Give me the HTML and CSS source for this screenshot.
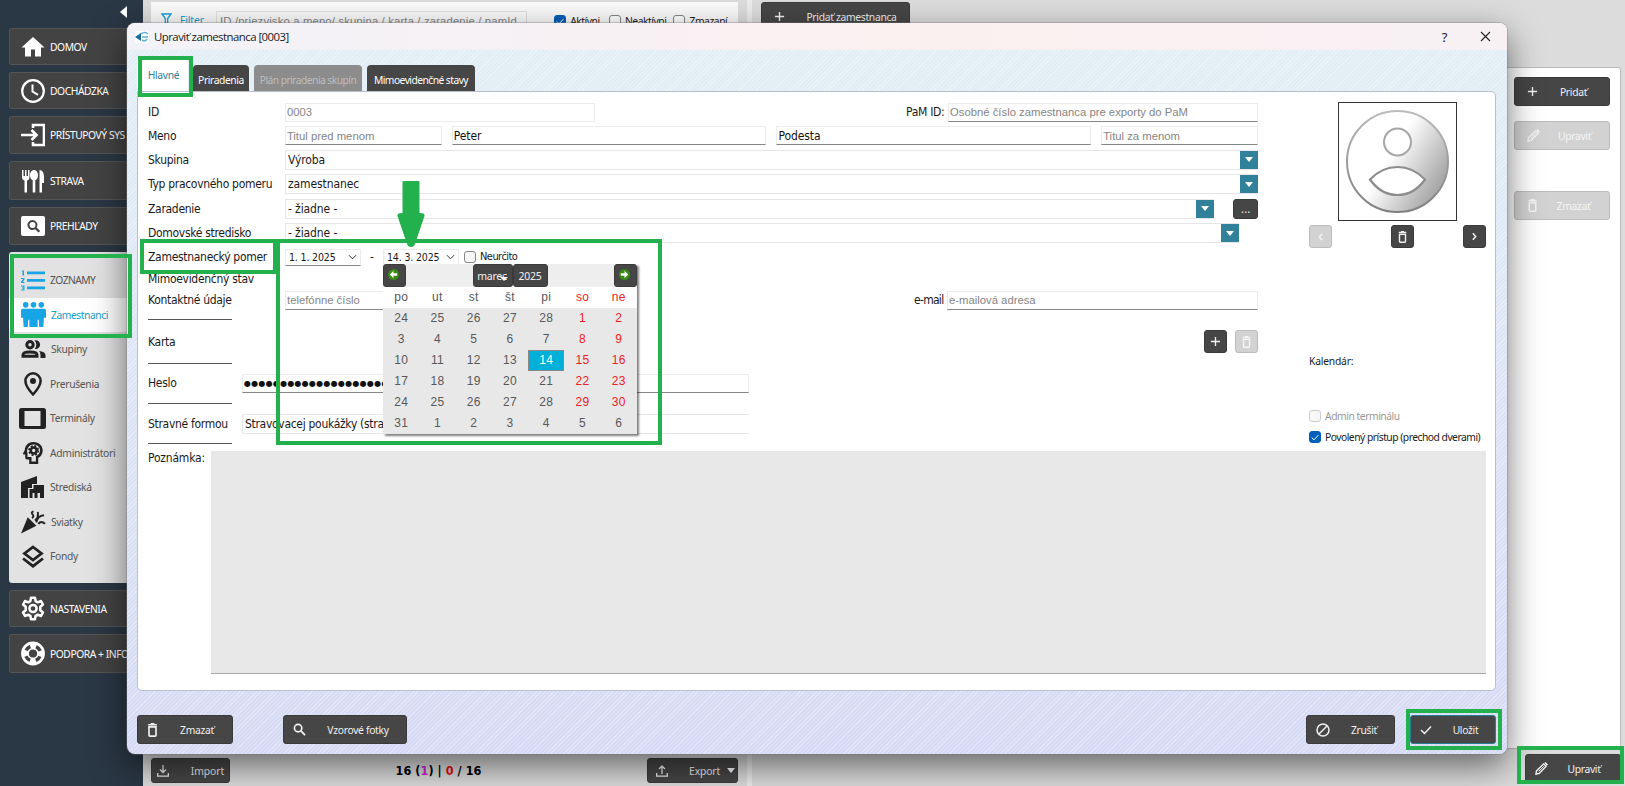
FILE: index.html
```
<!DOCTYPE html>
<html lang="sk">
<head>
    <meta charset="UTF-8">
    <meta name="viewport" content="width=device-width, initial-scale=1.0">
    <title>Upraviť zamestnanca [0003]</title>
    <link rel="stylesheet" href="styles.css">
</head>
<body>

    <!-- icon set -->
    <svg class="sprite" width="0" height="0">
        <symbol id="i-home" viewBox="0 0 24 24"><path d="M10 21.500v-7h4v7h6v-9h3.500L12 2 .5 12.500H4v9z"/></symbol>
        <symbol id="i-clock" viewBox="0 0 24 24"><circle cx="12" cy="12" r="10.800" fill="none" stroke="currentColor" stroke-width="2.200"/><path d="M11.500 5.500V12.500l5.500 3.300" fill="none" stroke="currentColor" stroke-width="2"/></symbol>
        <symbol id="i-login" viewBox="0 0 24 24"><path d="M12 5V2h11v20H12v-3M0 12h15M10.500 7l5 5-5 5" fill="none" stroke="currentColor" stroke-width="2.600"/></symbol>
        <symbol id="i-food" viewBox="0 0 24 24"><path d="M1 1h1.500v6H4V1h1.500v6H7V1h1.500v7q0 3-2.500 3.500V23.500H3.500V11.500Q1 11 1 8zM13 1c2.500 0 4 2.500 4 5.300 0 2.500-1 4.200-2.700 4.900v12.300h-2.600V11.200C10 10.500 9 8.800 9 6.300 9 3.500 10.500 1 13 1zM18.500 1C21.500 1 23 4 23 8v6h-2v9.500h-2.500z"/></symbol>
        <symbol id="i-preview" viewBox="0 0 24 20"><path fill-rule="evenodd" d="M2 0h20q2 0 2 2v16q0 2-2 2H2q-2 0-2-2V2q0-2 2-2zm9.500 4a5 5 0 1 0 2.600 9.200l3.500 3.300 1.500-1.500-3.400-3.400A5 5 0 0 0 11.500 4zm0 2a3 3 0 1 1 0 6 3 3 0 0 1 0-6z"/></symbol>
        <symbol id="i-list" viewBox="0 0 24 21"><path d="M6 1.500h18v2.800H6zM6 9h18v2.800H6zM6 16.500h18v2.800H6zM1 .5h2v5H1.500V1.500H1zM0 8h3.500v1.500L1.800 12h1.700v1H0v-1.300L2.200 9H0zM0 15.500h3.500v5H0v-1h2.300v-1H1v-1h1.300v-1H0z"/></symbol>
        <symbol id="i-people" viewBox="0 0 24 24"><circle cx="4.500" cy="2.700" r="2.700"/><circle cx="12" cy="2.700" r="2.700"/><circle cx="19.500" cy="2.700" r="2.700"/><path d="M1.500 6.500h21q1.500 0 1.500 2V15h-2l-.5 9h-4l-.5-7h-1v7H8v-7H7l-.5 7h-4L2 15H0V8.500q0-2 1.500-2z"/></symbol>
        <symbol id="i-group" viewBox="0 0 24 18"><g fill="none" stroke="currentColor" stroke-width="3"><circle cx="8.500" cy="4.700" r="3.200"/><path d="M1.500 16.300v-1.500q0-2.800 7-2.800t7 2.800v1.500z"/></g><path d="M13 .5a4.300 4.300 0 1 1 .3 8.300 6 6 0 0 0-.3-8.300zM17.500 11q6 .5 6.500 4v3h-5v-3q0-2.500-1.500-4z"/></symbol>
        <symbol id="i-pin" viewBox="0 0 18 24"><path d="M9 1.300a7.600 7.600 0 0 0-7.600 7.600C1.400 14 9 22.500 9 22.500S16.600 14 16.600 8.900A7.600 7.600 0 0 0 9 1.300z" fill="none" stroke="currentColor" stroke-width="2.500"/><circle cx="9" cy="9" r="3"/></symbol>
        <symbol id="i-tablet" viewBox="0 0 27 21"><path fill-rule="evenodd" d="M2.500 0h22Q27 0 27 2.500v16q0 2.500-2.500 2.500h-22Q0 21 0 18.500v-16Q0 0 2.500 0zM5.500 3v15h16V3z"/></symbol>
        <symbol id="i-admin" viewBox="0 0 20 22"><path fill-rule="evenodd" d="M10.500 0C5.500 0 2 3.500 1.800 8L0 11.500q-.3 1 .8 1h1.400v3q0 2 2 2h2V22h9v-6c2.800-1.500 4.500-4.300 4.500-7.500C19.700 3.500 15.500 0 10.500 0zm0 2.500c3.800 0 6.600 2.500 6.600 6 0 2.400-1.500 4.600-4.200 5.800v5.200H8.500V15h-4v-4.500H4c0-5 2.500-8 6.500-8z"/><circle cx="10.700" cy="8.500" r="3" fill="none" stroke="currentColor" stroke-width="2.600"/><circle cx="10.700" cy="8.500" r="4.700" fill="none" stroke="currentColor" stroke-width="1.600" stroke-dasharray="2 1.700"/></symbol>
        <symbol id="i-building" viewBox="0 0 24 22"><path d="M0 6L16 0v8h-5v4H7v10H0zM8.500 13h4V9H23v13h-4v-5h-2.500v5h-3v-5h-2v5h-3z"/></symbol>
        <symbol id="i-party" viewBox="0 0 26 24"><path d="M7 7l9 9-16 8z"/><path d="M11.500 8q2.500-2 .5-4t1-3M14.500 10.500q4-3 3-9M16 12.500q1-7 8-7.500M18 14q3-4 7 0" fill="none" stroke="currentColor" stroke-width="2"/></symbol>
        <symbol id="i-layers" viewBox="0 0 22 23"><path d="M11 2l8.500 6.500L11 15 2.500 8.500zM1 13.500l10 7.700 10-7.700" fill="none" stroke="currentColor" stroke-width="2.800"/></symbol>
        <symbol id="i-gear" viewBox="0 0 24 24"><path d="M10 1.200h4l.6 3.400 2.200 1.200 3.200-1.300 2 3.500-2.700 2.300v3.400l2.700 2.300-2 3.500-3.200-1.300-2.200 1.200-.6 3.400h-4l-.6-3.400-2.200-1.200L4 19.500 2 16l2.700-2.300v-3.400L2 8l2-3.500 3.200 1.300 2.200-1.200z" fill="none" stroke="currentColor" stroke-width="2.500" stroke-linejoin="round"/><circle cx="12" cy="12" r="3.600" fill="none" stroke="currentColor" stroke-width="2.500"/></symbol>
        <symbol id="i-help" viewBox="0 0 24 24"><circle cx="12" cy="12" r="10.600" fill="none" stroke="currentColor" stroke-width="2.600"/><circle cx="12" cy="12" r="7" fill="none" stroke="currentColor" stroke-width="5.500" stroke-dasharray="5.500 5.500" stroke-dashoffset="2.750"/><circle cx="12" cy="12" r="5" fill="none" stroke="currentColor" stroke-width="1.500"/></symbol>
        <symbol id="i-trash" viewBox="0 0 12 16"><path d="M1 2h10M4 1h4M2 4.500h8V14q0 1-1 1H3q-1 0-1-1z" fill="none" stroke="currentColor" stroke-width="1.900"/></symbol>
        <symbol id="i-plus" viewBox="0 0 12 12"><path d="M6 1v10M1 6h10" fill="none" stroke="currentColor" stroke-width="1.500"/></symbol>
        <symbol id="i-pencil" viewBox="0 0 14 14"><path d="M1 13l.6-3.400L9.300 2l2.700 2.700-7.700 7.700z" fill="none" stroke="currentColor" stroke-width="1.500"/><path d="M10 1.200L11.200 0 14 2.800 12.800 4z"/><path d="M4 10l5.500-5.500" stroke="currentColor"/></symbol>
        <symbol id="i-search" viewBox="0 0 14 14"><circle cx="5.500" cy="5.500" r="4" fill="none" stroke="currentColor" stroke-width="1.800"/><path d="M8.500 8.500l4.500 4.500" stroke="currentColor" stroke-width="2"/></symbol>
        <symbol id="i-block" viewBox="0 0 14 14"><circle cx="7" cy="7" r="6" fill="none" stroke="currentColor" stroke-width="1.500"/><path d="M11 3l-8 8" stroke="currentColor" stroke-width="1.500"/></symbol>
        <symbol id="i-check" viewBox="0 0 12 10"><path d="M1 5l3.500 3.500L11 1.500" fill="none" stroke="currentColor" stroke-width="1.500"/></symbol>
        <symbol id="i-download" viewBox="0 0 12 12"><path d="M6 0v7M3 4.500l3 3 3-3M.7 8v3.200h10.600V8" fill="none" stroke="currentColor" stroke-width="1.300"/></symbol>
        <symbol id="i-upload" viewBox="0 0 12 12"><path d="M6 9V1.500M3 4l3-3 3 3M.7 8v3.200h10.600V8" fill="none" stroke="currentColor" stroke-width="1.300"/></symbol>
        <symbol id="i-left" viewBox="0 0 6 10"><path d="M5 1L1.500 5 5 9" fill="none" stroke="currentColor" stroke-width="1.800"/></symbol>
        <symbol id="i-right" viewBox="0 0 6 10"><path d="M1 1l3.500 4L1 9" fill="none" stroke="currentColor" stroke-width="1.800"/></symbol>
        <symbol id="i-down" viewBox="0 0 10 6"><path d="M1 1l4 4 4-4" fill="none" stroke="currentColor" stroke-width="1"/></symbol>
        <symbol id="i-arrow" viewBox="0 0 12 12"><circle cx="6" cy="6" r="6" fill="#3b8a18"/><path d="M6 2L2 6l4 4V7.300h4V4.700H6z" fill="#fff"/></symbol>
    </svg>

    <div class="app">
        <nav class="sidebar">
            <span class="collapse"></span>
            <a class="nav-btn h1"><svg width="24" height="24"><use href="#i-home"/></svg>DOMOV</a>
            <a class="nav-btn h2"><svg width="24" height="24"><use href="#i-clock"/></svg>DOCHÁDZKA</a>
            <a class="nav-btn h3"><svg width="24" height="24"><use href="#i-login"/></svg>PRÍSTUPOVÝ SYS</a>
            <a class="nav-btn h4"><svg width="24" height="24"><use href="#i-food"/></svg>STRAVA</a>
            <a class="nav-btn h3"><svg width="24" height="20"><use href="#i-preview"/></svg>PREHĽADY</a>
            <div class="submenu">
                <a class="head"><svg class="blue" width="24" height="21"><use href="#i-list"/></svg>ZOZNAMY</a>
                <a class="active"><svg class="blue" width="25" height="25"><use href="#i-people"/></svg>Zamestnanci</a>
                <a><svg width="25" height="18"><use href="#i-group"/></svg>Skupiny</a>
                <a><svg width="24" height="24"><use href="#i-pin"/></svg>Prerušenia</a>
                <a class="wide"><svg width="27" height="21"><use href="#i-tablet"/></svg>Terminály</a>
                <a><svg width="24" height="22"><use href="#i-admin"/></svg>Administrátori</a>
                <a><svg width="24" height="22"><use href="#i-building"/></svg>Strediská</a>
                <a><svg width="25" height="24"><use href="#i-party"/></svg>Sviatky</a>
                <a><svg width="24" height="23"><use href="#i-layers"/></svg>Fondy</a>
            </div>
            <a class="nav-btn h2"><svg width="24" height="25"><use href="#i-gear"/></svg>NASTAVENIA</a>
            <a class="nav-btn h4"><svg width="24" height="25"><use href="#i-help"/></svg>PODPORA + INFO</a>
        </nav>

        <section class="list-pane">
            <div class="filter">
                <svg width="11" height="12" viewBox="0 0 11 12"><path d="M1 1h9L6.700 5.500V11L4.300 9.500v-4z" fill="none" stroke="#18a0d8" stroke-width="1.300"/></svg>
                <span class="filter-label">Filter</span>
                <input class="filter-input" placeholder="ID /priezvisko a meno/ skupina / karta / zaradenie / pamId">
                <span class="check f1"><i class="box on"><svg width="8" height="7"><use href="#i-check"/></svg></i>Aktívni</span>
                <span class="check f2"><i class="box"></i>Neaktívni</span>
                <span class="check"><i class="box"></i>Zmazaní</span>
            </div>
            <div class="list-footer">
                <button class="btn import"><svg width="12" height="12"><use href="#i-download"/></svg>Import</button>
                <b class="count">16 (<em>1</em>) | <strong>0</strong> / 16</b>
                <button class="btn export"><svg width="12" height="12"><use href="#i-upload"/></svg>Export<i class="tri"></i></button>
            </div>
        </section>

        <section class="detail-pane">
            <div class="detail-top"><button class="btn add-emp"><svg width="11" height="11"><use href="#i-plus"/></svg>Pridať zamestnanca</button></div>
            <div class="detail-card">
                <button class="btn side"><svg width="11" height="11"><use href="#i-plus"/></svg><span>Pridať</span></button>
                <button class="btn side off"><svg width="13" height="13"><use href="#i-pencil"/></svg><span>Upraviť</span></button>
                <button class="btn side off last"><svg width="11" height="13"><use href="#i-trash"/></svg><span>Zmazať</span></button>
            </div>
            <button class="btn side edit"><svg width="13" height="13"><use href="#i-pencil"/></svg><span>Upraviť</span></button>
        </section>
    </div>

    <div class="dialog">
        <header class="titlebar">
            <svg width="14" height="12" viewBox="0 0 14 12"><rect width="14" height="12" rx="2" fill="#fff"/><path d="M6 2v8L0 6z" fill="#1c6f94"/><path d="M6 3q4-3 7 0M7 6h6M7 9q3 2 5-1" fill="none" stroke="#5fb4d8" stroke-width="1.600"/></svg>
            <span class="title">Upraviť zamestnanca [0003]</span>
            <span class="help">?</span>
            <svg class="close" width="11" height="11" viewBox="0 0 11 11"><path d="M1 1l9 9M10 1l-9 9" stroke="#222" stroke-width="1.100"/></svg>
        </header>

        <div class="tabs">
            <span class="tab current">Hlavné</span>
            <span class="tab t-pri">Priradenia</span>
            <span class="tab t-plan">Plán priradenia skupín</span>
            <span class="tab t-mimo">Mimoevidenčné stavy</span>
        </div>

        <main class="panel">
            <div class="columns">
                <form class="form">
                    <div class="row r24">
                        <label>ID</label>
                        <input class="w310 flat" placeholder="0003">
                        <label class="push">PaM ID:</label>
                        <input class="w310" placeholder="Osobné číslo zamestnanca pre exporty do PaM">
                    </div>
                    <div class="row r23">
                        <label>Meno</label>
                        <input class="w157" placeholder="Titul pred menom">
                        <input class="w314" value="Peter">
                        <input class="w314" value="Podesta">
                        <input class="w157" placeholder="Titul za menom">
                    </div>
                    <div class="row r25"><label>Skupina</label><div class="select">Výroba<i></i></div></div>
                    <div class="row r24"><label>Typ pracovného pomeru</label><div class="select">zamestnanec<i></i></div></div>
                    <div class="row r25"><label>Zaradenie</label><div class="select">- žiadne -<i></i></div><button type="button" class="btn dots">...</button></div>
                    <div class="row r24"><label>Domovské stredisko</label><div class="select short">- žiadne -<i></i></div></div>
                    <div class="row r24">
                        <label>Zamestnanecký pomer</label>
                        <div class="date">1. 1. 2025<svg width="9" height="6"><use href="#i-down"/></svg></div>
                        <span class="dash">-</span>
                        <div class="date">14. 3. 2025<svg width="9" height="6"><use href="#i-down"/></svg></div>
                        <span class="check never"><i class="box"></i>Neurčito</span>
                    </div>
                    <div class="row r19"><label>Mimoevidenčný stav</label></div>
                    <div class="row r24">
                        <label>Kontaktné údaje</label>
                        <input class="w310" placeholder="telefónne číslo">
                        <label class="push mail">e-mail</label>
                        <input class="w311" placeholder="e-mailová adresa">
                    </div>
                    <hr class="l14">
                    <div class="row r31">
                        <label>Karta</label>
                        <button type="button" class="btn sq push"><svg width="11" height="11"><use href="#i-plus"/></svg></button>
                        <button type="button" class="btn sq off"><svg width="9" height="12"><use href="#i-trash"/></svg></button>
                    </div>
                    <hr class="l12">
                    <div class="row r28 narrow"><label>Heslo</label><input class="w507 pass" value="●●●●●●●●●●●●●●●●●●●●●●●●●●●●●●●●"></div>
                    <hr class="l12">
                    <div class="row r29 narrow"><label>Stravné formou</label><div class="select plain">Stravovacej poukážky (stra</div></div>
                    <hr class="l10">
                </form>

                <aside class="photo">
                    <div class="avatar">
                        <svg width="117" height="117" viewBox="0 0 117 117">
                            <defs><linearGradient id="g" x1="0" y1="0.200" x2="1" y2="0.800"><stop offset=".42" stop-color="#fff"/><stop offset=".9" stop-color="#a9a9a9"/></linearGradient>
                            <linearGradient id="s" x1="0" y1="0" x2="0" y2="1"><stop offset="0" stop-color="#bbb"/><stop offset="1" stop-color="#808080"/></linearGradient></defs>
                            <circle cx="58.500" cy="58.500" r="50.500" fill="url(#g)" stroke="url(#s)" stroke-width="2"/>
                            <circle cx="58.500" cy="39" r="13.500" fill="#fff" stroke="#a5a5a5" stroke-width="2"/>
                            <path d="M31 76.500Q43 64 58.500 64T86 76.500Q75 92 58.500 92T31 76.500z" fill="#fff" stroke="#8c8c8c" stroke-width="2.200"/>
                        </svg>
                    </div>
                    <div class="photo-nav">
                        <button class="btn sq off"><svg width="5" height="8"><use href="#i-left"/></svg></button>
                        <button class="btn sq mid"><svg width="9" height="12"><use href="#i-trash"/></svg></button>
                        <button class="btn sq"><svg width="5" height="9"><use href="#i-right"/></svg></button>
                    </div>
                    <p class="calendar-label">Kalendár:</p>
                    <span class="check muted"><i class="box"></i>Admin terminálu</span>
                    <span class="check access"><i class="box on"><svg width="8" height="7"><use href="#i-check"/></svg></i>Povolený prístup (prechod dverami)</span>
                </aside>
            </div>
            <div class="note"><label>Poznámka:</label><textarea></textarea></div>
        </main>

        <footer class="actions">
            <button class="btn a-del"><svg width="11" height="14"><use href="#i-trash"/></svg><span>Zmazať</span></button>
            <button class="btn a-photo"><svg width="13" height="13"><use href="#i-search"/></svg><span>Vzorové fotky</span></button>
            <button class="btn a-cancel"><svg width="14" height="14"><use href="#i-block"/></svg><span>Zrušiť</span></button>
            <button class="btn a-save"><svg width="12" height="10"><use href="#i-check"/></svg><span>Uložit</span></button>
        </footer>
    </div>

    <!-- date picker popup -->
    <div class="picker">
        <div class="picker-head">
            <button class="btn prev"><svg width="11" height="11"><use href="#i-arrow"/></svg></button>
            <button class="btn month">marec<i class="tri"></i></button>
            <button class="btn year">2025</button>
            <button class="btn prev"><svg class="flip" width="11" height="11"><use href="#i-arrow"/></svg></button>
        </div>
        <div class="days names"><span>po</span><span>ut</span><span>st</span><span>št</span><span>pi</span><span class="red">so</span><span class="red">ne</span></div>
        <div class="days">
            <span>24</span><span>25</span><span>26</span><span>27</span><span>28</span><span class="red">1</span><span class="red">2</span>
            <span>3</span><span>4</span><span>5</span><span>6</span><span>7</span><span class="red">8</span><span class="red">9</span>
            <span>10</span><span>11</span><span>12</span><span>13</span><span class="sel">14</span><span class="red">15</span><span class="red">16</span>
            <span>17</span><span>18</span><span>19</span><span>20</span><span>21</span><span class="red">22</span><span class="red">23</span>
            <span>24</span><span>25</span><span>26</span><span>27</span><span>28</span><span class="red">29</span><span class="red">30</span>
            <span>31</span><span>1</span><span>2</span><span>3</span><span>4</span><span>5</span><span>6</span>
        </div>
    </div>

    <!-- highlights -->
    <div class="mark m-tab"></div>
    <div class="mark m-menu"></div>
    <div class="mark m-label"></div>
    <div class="mark m-date"></div>
    <div class="mark m-save"></div>
    <div class="mark m-edit"></div>
    <svg class="pointer" width="28" height="68" viewBox="0 0 28 68"><path d="M6.500 1h15q1 0 1 1v31l4 .5q1.500 1 1 2.500L18 64q-1 3-4 3t-4-3L.5 36q-.5-1.500 1-2.500l4-.5V2q0-1 1-1z" fill="#22b14c"/></svg>

</body>
</html>
```
FILE: styles.css
```
:root {
    --dark: #464646;
    --mark: #22b14c;
    --teal: #32819a;
    --ui: "DejaVu Sans Condensed", "DejaVu Sans", Tahoma, sans-serif;
    --arial: "Liberation Sans", Arial, sans-serif;
}
* {
    box-sizing: border-box;
}
body {
    margin: 0;
    width: 1625px;
    height: 786px;
    overflow: hidden;
    position: relative;
    font: 10.3px/14px "Noto Sans", sans-serif;
    letter-spacing: -0.45px;
    color: #1a1a1a;
}
.sprite {
    display: none;
}
svg {
    fill: currentColor;
    flex: none;
}
input, textarea, button {
    font: inherit;
    letter-spacing: inherit;
    margin: 0;
    border-radius: 0;
    outline: none;
}
.btn {
    display: flex;
    align-items: center;
    justify-content: center;
    flex: none;
    padding: 0;
    border: 1px solid #3a3a3a;
    border-radius: 3px;
    background: var(--dark);
    color: #f0f0f0;
    letter-spacing: -0.3px;
}
.btn.off {
    background: #d2d2d2;
    border-color: #bcbcbc;
    color: #f5f5f5;
}
.check {
    display: flex;
    align-items: center;
    gap: 4px;
    white-space: nowrap;
}
.box {
    display: flex;
    align-items: center;
    justify-content: center;
    flex: none;
    width: 12px;
    height: 12px;
    border: 1px solid #868686;
    border-radius: 3px;
    background: #f6f6f6;
    color: #fff;
}
.box.on {
    background: #005fb8;
    border-color: #005fb8;
}

/* application behind the dialog */
.app {
    display: grid;
    grid-template-columns: 143px 609px 1fr;
    height: 786px;
    background: #dcdcdc;
}
.sidebar {
    display: flex;
    flex-direction: column;
    gap: 7px;
    padding-left: 9px;
    background: #2a3744;
    overflow: hidden;
}
.collapse {
    align-self: flex-end;
    margin: 6px 16px 3px 0;
    border: solid transparent;
    border-width: 6.5px 7px 6.5px 0;
    border-right-color: #fff;
}
.nav-btn {
    display: flex;
    align-items: center;
    gap: 5px;
    flex: none;
    padding-left: 11px;
    border: 1px solid #555;
    border-radius: 2px;
    background: #434343;
    color: #fff;
    white-space: nowrap;
}
.h1 { height: 37px; }
.h2 { height: 37px; }
.h3 { height: 38px; }
.h4 { height: 39px; }
.submenu {
    flex: none;
    height: 331px;
    padding-top: 11px;
    border-radius: 3px;
    background: #e2e2e2;
}
.submenu a {
    display: flex;
    align-items: center;
    gap: 5px;
    height: 34.5px;
    padding-left: 12px;
    color: #555;
    letter-spacing: -0.3px;
}
.submenu a.head {
    letter-spacing: -0.55px;
}
.submenu a.wide {
    gap: 4px;
    padding-left: 10px;
}
.submenu a svg {
    color: #222;
}
.submenu a svg.blue {
    color: #18a5e6;
}
.submenu a.active {
    background: #fff;
    color: #18a0c8;
    letter-spacing: -0.45px;
}
.list-pane {
    display: flex;
    flex-direction: column;
    justify-content: space-between;
    padding: 2px 14px 3px 8px;
    border-right: 5px solid #ececec;
}
.filter {
    display: flex;
    align-items: flex-start;
    height: 60px;
    width: 587px;
    padding: 11px 0 0 10px;
    background: #fafafa;
}
.filter-label {
    width: 22px;
    margin: 0 14px 0 8px;
    color: #18a0c8;
    letter-spacing: -0.1px;
}
.filter-input {
    width: 318px;
    height: 20px;
    padding: 0 3px;
    margin-top: -2px;
    border: 1px solid #e0e0e0;
    background: none;
}
.filter-input::placeholder {
    letter-spacing: 0.15px;
}
.filter .check { margin-top: 1px; width: 66px; }
.filter .f1 { margin-left: 27px; width: 56px; }
.filter .box { background: #fff; }
.filter .box.on { background: #005fb8; }
.list-footer {
    display: flex;
    align-items: center;
    justify-content: space-between;
    width: 587px;
}
.import {
    width: 79px;
    height: 25px;
    gap: 22px;
    letter-spacing: 0;
}
.export {
    width: 91px;
    height: 25px;
    gap: 21px;
    justify-content: flex-start;
    padding-left: 8px;
    letter-spacing: -0.1px;
}
.export .tri {
    margin-left: -14px;
}
.tri {
    border: solid transparent;
    border-width: 5px 4.5px 0;
    border-top-color: #fff;
}
.count {
    font: bold 12.5px var(--ui);
    letter-spacing: 0.05px;
    color: #000;
}
.count em {
    font-style: normal;
    color: #d020d0;
}
.count strong {
    color: #e01010;
}
.detail-pane {
    display: flex;
    flex-direction: column;
}
.detail-top {
    height: 67px;
    padding: 2px 0 0 9px;
}
.add-emp {
    width: 149px;
    height: 29px;
    gap: 21px;
    letter-spacing: -0.3px;
}
.detail-card {
    display: flex;
    flex-direction: column;
    align-items: flex-end;
    height: 682px;
    width: 869px;
    padding: 9px 10px 0 0;
    border: 1px solid #bbb;
    border-radius: 3px;
    background: #fff;
}
.side {
    width: 96px;
    height: 29px;
    margin-bottom: 15px;
    justify-content: flex-start;
    padding-left: 12px;
}
.side span {
    flex: 1;
    text-align: center;
}
.side.last {
    margin-top: 26px;
}
.side.edit {
    align-self: flex-end;
    margin: 5px 4px 0 0;
    padding-left: 9px;
}

/* dialog */
.dialog {
    position: absolute;
    left: 127px;
    top: 23px;
    width: 1380px;
    height: 731px;
    padding: 0 11px 0 10px;
    border-radius: 8px;
    background: repeating-linear-gradient(135deg, rgba(255,255,255,.3) 0 1px, transparent 1px 3px), linear-gradient(#e2eff5, #dde2f5 60%, #d6daf4);
    box-shadow: 0 0 0 1px rgba(120,120,120,.35), 0 12px 34px rgba(0,0,0,.55);
}
.titlebar {
    display: flex;
    align-items: center;
    height: 27px;
    margin: 0 -11px 0 -10px;
    padding: 0 16px 0 8px;
    border-radius: 8px 8px 0 0;
    background: linear-gradient(90deg, #f2f2f8, #fbf0f0 60%, #f7f1f4);
}
.title {
    margin-left: 5px;
    font: 11.4px/16px "Open Sans", "Noto Sans", sans-serif;
    letter-spacing: -0.53px;
}
.help {
    margin-left: auto;
    font-size: 13px;
}
.close {
    margin-left: 33px;
}
.tabs {
    display: flex;
    align-items: flex-end;
    gap: 5px;
    height: 41px;
}
.tab {
    height: 26px;
    padding-top: 8px;
    border-radius: 4px 4px 0 0;
    background: var(--dark);
    color: #fff;
    text-align: center;
    white-space: nowrap;
    letter-spacing: -0.55px;
}
.tab.current {
    width: 51px;
    height: 31px;
    padding-left: 2px;
    background: #fff;
    color: #32819a;
    letter-spacing: -0.3px;
}
.t-pri { width: 56px; letter-spacing: -0.4px; }
.t-plan { width: 108px; background: #8c8c8c; color: #bdbdbd; }
.t-mimo { width: 108px; }
.panel {
    height: 600px;
    padding: 8px 8px 0 10px;
    border: 1px solid #b9c0cc;
    border-radius: 0 5px 5px 5px;
    background: #fff;
}
.columns {
    display: flex;
    gap: 51px;
}
.form {
    width: 1110px;
    font: 12px/16px var(--ui);
    letter-spacing: -0.1px;
}
.row {
    display: flex;
    align-items: center;
}
.r19 { height: 19px; }
.r23 { height: 23px; gap: 10px; }
.r24 { height: 24px; }
.r25 { height: 25px; }
.r28 { height: 28px; }
.r29 { height: 29px; }
.r31 { height: 31px; }
.row label {
    width: 137px;
    white-space: nowrap;
    letter-spacing: -0.3px;
}
.r23 label {
    width: 127px;
}
.narrow label {
    width: 94px;
}
.row label.push {
    width: 42px;
    margin-left: auto;
}
.row label.mail {
    width: 33px;
    letter-spacing: -0.7px;
}
.push {
    margin-left: auto;
}
.row input {
    height: 19px;
    padding: 0 2px 0 1px;
    border: 1px solid #ececec;
    border-bottom-color: #868686;
    background: #fff;
    color: #111;
}
::placeholder {
    font: 11.3px var(--arial);
    letter-spacing: 0;
    color: #858585;
    opacity: 1;
}
.row input.flat {
    border-bottom-color: #ececec;
}
.row .w157 { width: 157px; }
.row .w310 { width: 310px; }
.row .w311 { width: 311px; }
.row .w314 { width: 315px; }
.row .w507 { width: 507px; }
.row .pass {
    font: 8px "DejaVu Sans", sans-serif;
    letter-spacing: 0.25px;
}
.select {
    display: flex;
    align-items: center;
    justify-content: space-between;
    flex: 1;
    height: 20px;
    padding-left: 2px;
    border: 1px solid #e6e6e6;
    border-right: 0;
}
.select.short {
    margin-right: 19px;
}
.select.plain {
    flex: none;
    width: 507px;
    letter-spacing: -0.3px;
}
.select i {
    display: flex;
    align-items: center;
    justify-content: center;
    width: 18px;
    height: 18px;
    background: var(--teal);
}
.select i::before {
    content: "";
    border: solid transparent;
    border-width: 5px 4.5px 0;
    border-top-color: #fff;
}
.dots {
    width: 25px;
    height: 20px;
    margin-left: 19px;
}
.date {
    display: flex;
    align-items: center;
    justify-content: space-between;
    width: 76px;
    height: 17px;
    padding: 0 3px;
    border: 1px solid #ececec;
    border-bottom-color: #868686;
    font-size: 10.5px;
    letter-spacing: -0.15px;
    white-space: nowrap;
}
.dash {
    width: 22px;
    text-align: center;
}
.never {
    margin-left: 5px;
    font-size: 11px;
    letter-spacing: -0.55px;
}
hr {
    width: 84px;
    margin: 0;
    border: 0;
    background: linear-gradient(#555, #555) center / 100% 1px no-repeat;
}
.l10 { height: 10px; }
.l12 { height: 12px; }
.l14 { height: 14px; }
.sq {
    width: 23px;
    height: 23px;
}
.sq + .sq.off {
    margin-left: 8px;
}
.photo {
    width: 177px;
}
.avatar {
    width: 119px;
    height: 119px;
    margin: 2px 0 4px 29px;
    border: 1px solid #333;
}
.photo-nav {
    display: flex;
    justify-content: space-between;
}
.photo-nav .mid {
    margin-left: 10px;
}
.calendar-label {
    margin: 106px 0 41px 0;
    letter-spacing: -0.2px;
}
.access {
    margin-top: 7px;
    letter-spacing: -0.5px;
}
.muted {
    color: #999;
    letter-spacing: -0.45px;
}
.muted .box {
    border-color: #ccc;
}
.note {
    display: flex;
    margin-top: 3px;
}
.note label {
    width: 63px;
    font: 12px/14px var(--ui);
    letter-spacing: -0.2px;
}
.note textarea {
    width: 1275px;
    height: 223px;
    border: 0;
    border-bottom: 1px solid #a8a8a8;
    background: #e8e8e8;
    resize: none;
}
.actions {
    display: flex;
    padding-top: 24px;
}
.actions .btn {
    height: 29px;
    justify-content: flex-start;
    padding-left: 9px;
}
.actions span {
    flex: 1;
    padding-left: 4px;
    text-align: center;
}
.a-del { width: 96px; }
.a-photo { width: 124px; margin-left: 50px; }
.a-cancel { width: 89px; margin-left: auto; }
.a-save { width: 86px; margin-left: 15px; }
.actions .a-save { border: 1px solid #2a7d96; }

/* date picker */
.picker {
    position: absolute;
    left: 383px;
    top: 264px;
    width: 254px;
    background: #e8e8e8;
    box-shadow: 2px 2px 2px rgba(0,0,0,.5);
    font: 12px/21px var(--arial);
    letter-spacing: 0.3px;
    color: #585858;
}
.picker-head {
    display: flex;
    height: 23px;
    background: #eee;
}
.picker .btn {
    width: 23px;
    font: 10.5px "Noto Sans", sans-serif;
}
.picker .prev {
    padding: 0 2px 2px 0;
}
.picker .month {
    width: 40px;
    margin-left: auto;
}
.month .tri {
    margin: 7px 0 0 -7px;
    border-width: 4px 4px 0;
}
.picker .year {
    width: 35px;
    margin-right: auto;
}
.flip {
    transform: scaleX(-1);
}
.days {
    display: grid;
    grid-template-columns: repeat(7, 1fr);
    text-align: center;
}
.days.names {
    background: #fff;
}
.days span {
    height: 21px;
}
.red {
    color: #f01c24;
}
.sel {
    background: #00b0d8;
    color: #fff;
    box-shadow: inset 0 0 0 1px #888;
}

/* highlights */
.mark {
    position: absolute;
    border: 4px solid var(--mark);
}
.m-tab { left: 138px; top: 56px; width: 55px; height: 41px; }
.m-menu { left: 10px; top: 254px; width: 122px; height: 84px; }
.m-label { left: 140px; top: 239px; width: 137px; height: 35px; }
.m-date { left: 276px; top: 239px; width: 386px; height: 206px; }
.m-save { left: 1406px; top: 709px; width: 96px; height: 41px; }
.m-edit { left: 1517px; top: 746px; width: 107px; height: 38px; }
.pointer {
    position: absolute;
    left: 397px;
    top: 180px;
}
```
